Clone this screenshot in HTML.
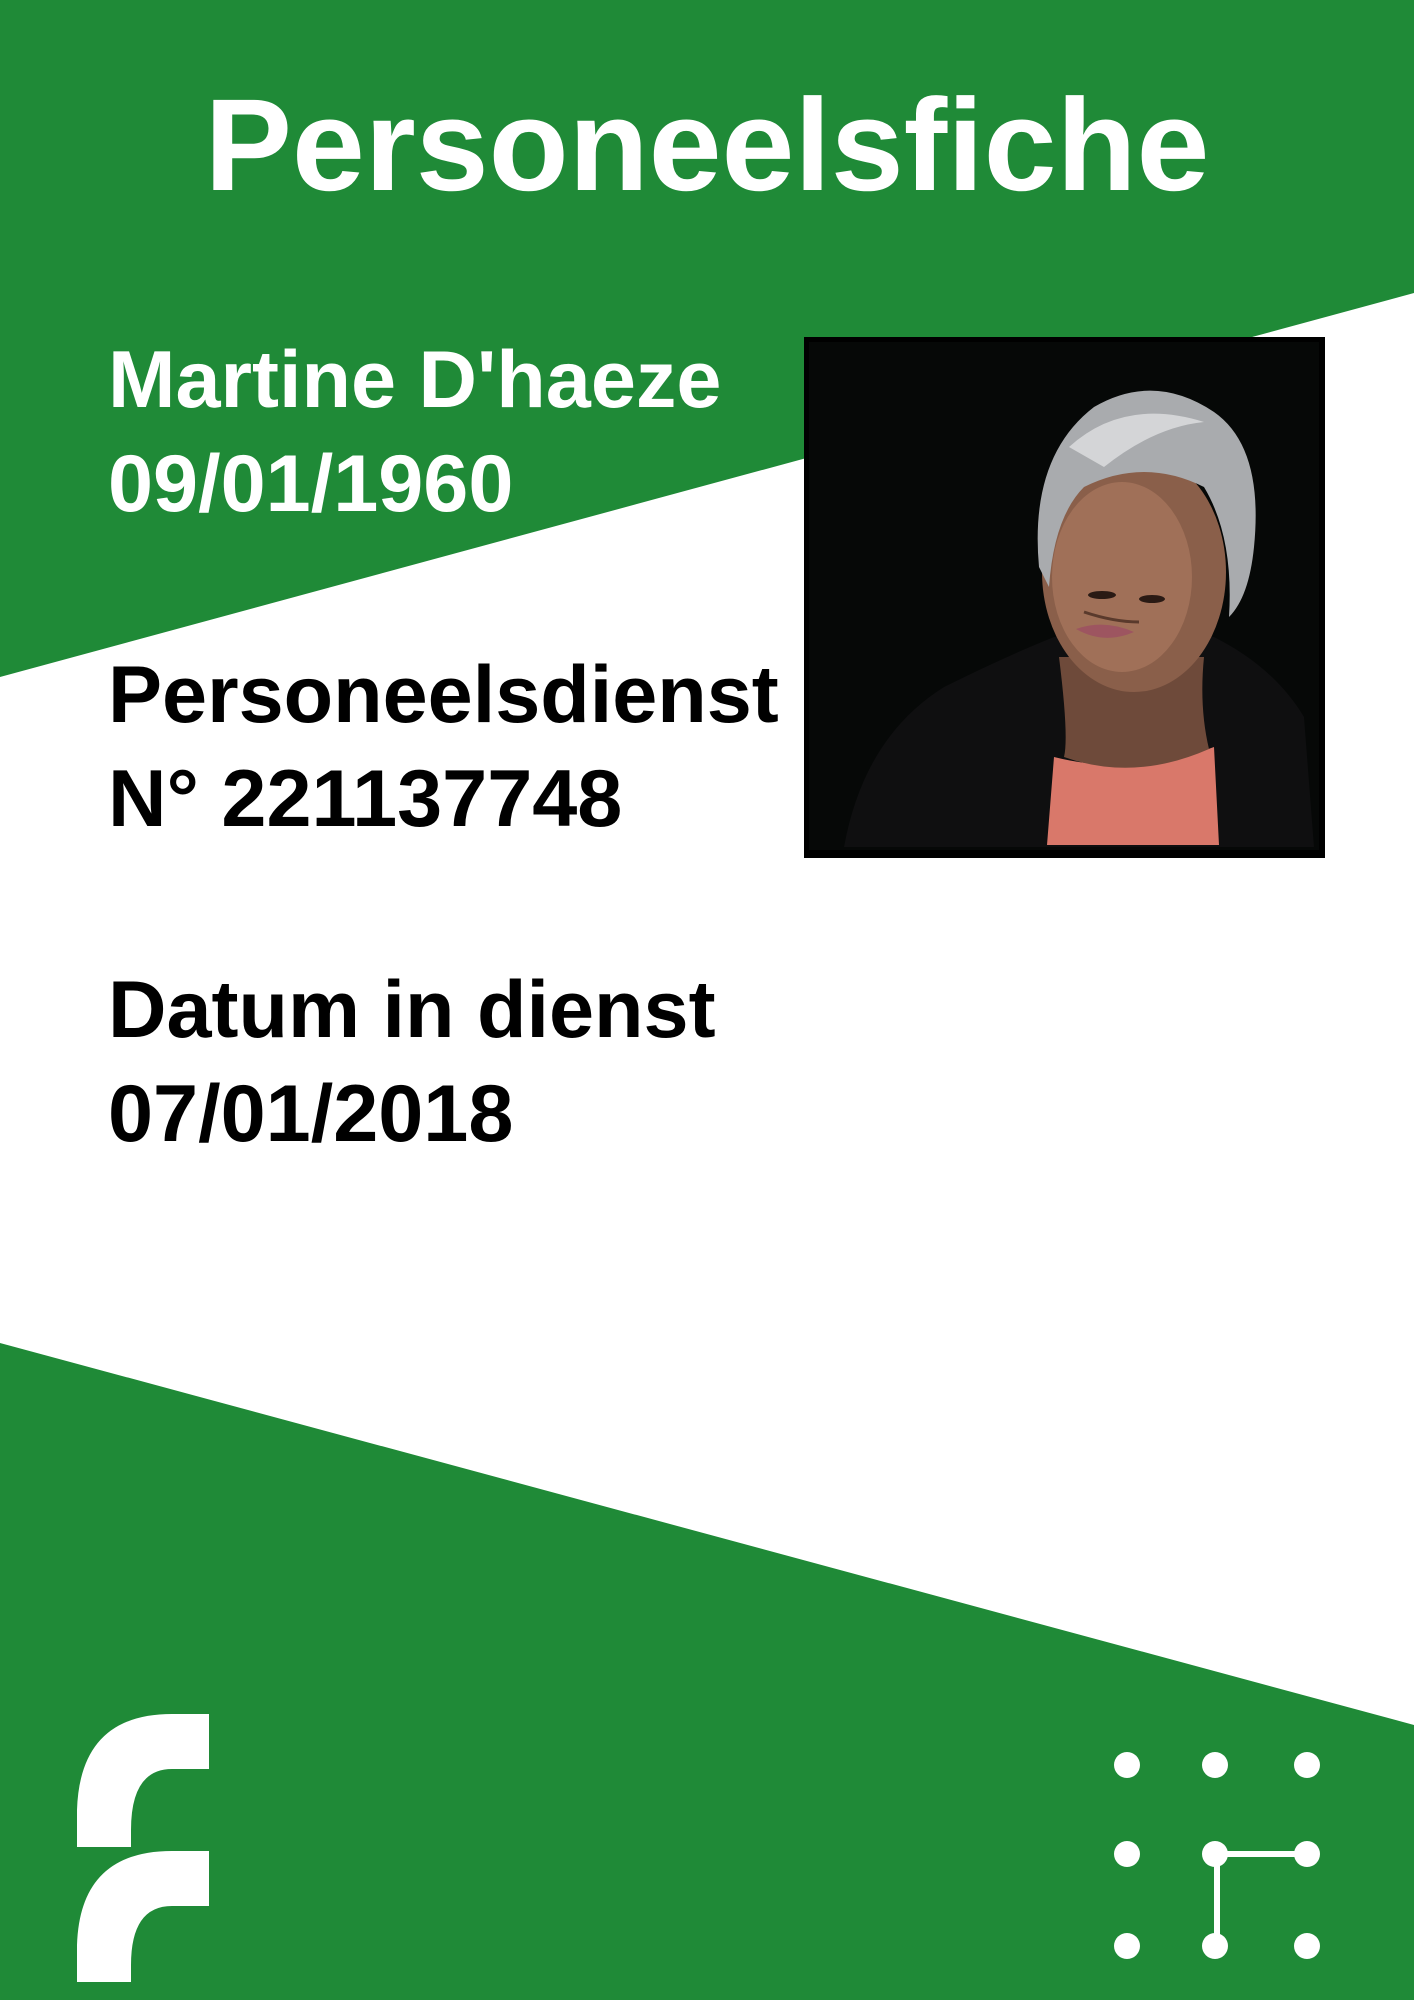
<!DOCTYPE html>
<html><head><meta charset="utf-8"><style>
html,body{margin:0;padding:0;}
body{width:1414px;height:2000px;position:relative;overflow:hidden;background:#fff;font-family:"Liberation Sans",sans-serif;font-weight:bold;}
svg{position:absolute;left:0;top:0;}
.t{position:absolute;left:108px;font-size:81px;line-height:1;white-space:nowrap;}
</style></head><body>
<svg width="1414" height="2000" viewBox="0 0 1414 2000">
<polygon points="0,0 1414,0 1414,293 0,677" fill="#1f8a37"/>
<polygon points="0,1343 1414,1725 1414,2000 0,2000" fill="#1f8a37"/>
<path d="M77,1847 L77,1810 Q80,1714 172,1714 L209,1714 L209,1769 L172,1769 Q131,1769 131,1830 L131,1847 Z" fill="#fff"/>
<path d="M77,1982 L77,1945 Q80,1851 172,1851 L209,1851 L209,1906 L172,1906 Q131,1906 131,1965 L131,1982 Z" fill="#fff"/>
<g fill="#fff">
<circle cx="1127" cy="1765" r="13"/><circle cx="1215" cy="1765" r="13"/><circle cx="1307" cy="1765" r="13"/>
<circle cx="1127" cy="1854" r="13"/><circle cx="1215" cy="1854" r="13"/><circle cx="1307" cy="1854" r="13"/>
<circle cx="1127" cy="1946" r="13"/><circle cx="1215" cy="1946" r="13"/><circle cx="1307" cy="1946" r="13"/>
</g>
<path d="M1307,1854 L1217,1854 L1217,1946" stroke="#fff" stroke-width="6" fill="none"/>
<g transform="translate(804,337)">
<rect width="521" height="521" fill="#000"/>
<rect x="5" y="5" width="510" height="508" fill="#060807"/>
<path d="M40,510 Q60,400 140,350 Q200,320 250,300 L410,300 Q470,330 500,380 L510,510 Z" fill="#0f0f10"/>
<path d="M250,420 Q330,440 410,410 L415,508 L243,508 Z" fill="#d9786a"/>
<path d="M255,320 Q265,400 260,420 Q330,445 405,412 Q395,370 400,320 Z" fill="#6e4a3a"/>
<ellipse cx="330" cy="235" rx="92" ry="120" fill="#8a5f4a"/>
<ellipse cx="318" cy="240" rx="70" ry="95" fill="#a07058"/>
<path d="M235,230 Q225,120 290,70 Q350,35 410,75 Q460,110 450,210 Q445,260 425,280 Q430,200 400,150 Q340,120 280,150 Q250,180 245,250 Z" fill="#a9abae"/>
<path d="M265,110 Q320,60 400,85 Q350,90 300,130 Z" fill="#d4d5d7"/>
<ellipse cx="298" cy="258" rx="14" ry="4" fill="#2a1a14"/>
<ellipse cx="348" cy="262" rx="13" ry="4" fill="#2a1a14"/>
<path d="M280,275 Q310,285 335,285" stroke="#5a3a2c" stroke-width="3" fill="none"/>
<path d="M272,292 Q300,282 330,295 Q300,308 272,292 Z" fill="#9d5560"/>
</g>
</svg>
<div style="position:absolute;left:0;width:1414px;top:79px;text-align:center;color:#fff;font-size:131px;line-height:1;">Personeelsfiche</div>
<div class="t" style="top:340px;color:#fff;">Martine D'haeze</div>
<div class="t" style="top:444px;color:#fff;">09/01/1960</div>
<div class="t" style="top:655px;color:#000;">Personeelsdienst</div>
<div class="t" style="top:759px;color:#000;">N° 221137748</div>
<div class="t" style="top:970px;color:#000;">Datum in dienst</div>
<div class="t" style="top:1074px;color:#000;">07/01/2018</div>
</body></html>
